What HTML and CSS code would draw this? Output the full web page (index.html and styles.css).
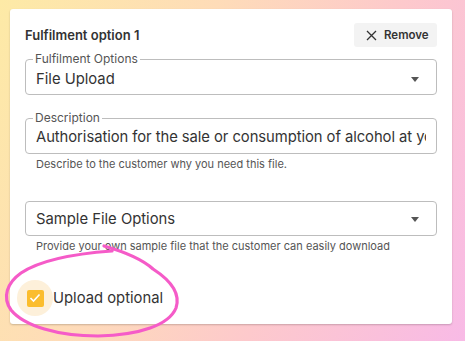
FILE: index.html
```html
<!DOCTYPE html>
<html lang="en">
<head>
  <meta charset="UTF-8" />
  <title>Fulfilment option</title>
  <link rel="stylesheet" href="styles.css">
</head>
<body>
  <div class="card">
    <div class="card-head">
      <h2 class="title">Fulfilment option 1</h2>
      <button class="remove-btn">
        <svg width="11" height="11" viewBox="0 0 11 11"><path d="M1 1L10 10M10 1L1 10" stroke="#333" stroke-width="1.3" fill="none"/></svg>
        Remove
      </button>
    </div>

    <fieldset class="field select">
      <legend>Fulfilment Options</legend>
      <div class="value">File Upload</div>
      <span class="caret"></span>
    </fieldset>

    <fieldset class="field desc">
      <legend>Description</legend>
      <div class="value">Authorisation for the sale or consumption of alcohol at your venue or event</div>
    </fieldset>
    <p class="helper">Describe to the customer why you need this file.</p>

    <div class="field select plain">
      <div class="value">Sample File Options</div>
      <span class="caret"></span>
    </div>
    <p class="helper">Provide your own sample file that the customer can easily download</p>

    <label class="check-row">
      <span class="check-halo">
        <span class="check-box">
          <svg width="12" height="10" viewBox="0 0 12 10"><path d="M1.5 5L4.5 8L10.5 1.5" stroke="#fff" stroke-width="1.6" fill="none"/></svg>
        </span>
      </span>
      Upload optional
    </label>
  </div>

  <!-- hand drawn highlight -->
  <svg class="scribble" viewBox="0 0 465 341" width="465" height="341">
    <path d="M104 246 C125 252 142 259 153 269 C170 280 181 293 176 308 C169 325 140 335 98 336 C58 336 24 326 11 310 C2 297 7 283 21 273 C39 261 70 254 112 251"
      stroke="#f55bc8" stroke-width="3.2" fill="none" stroke-linecap="round"/>
  </svg>
</body>
</html>
```

FILE: styles.css
```css
body {
  margin: 0;
  padding: 9px 13px 18px 10px;
  height: 341px;
  box-sizing: border-box;
  position: relative;
  overflow: hidden;
  font-family: 'Inter', 'Liberation Sans', sans-serif;
  color: #333;
  background: linear-gradient(115deg, #fdeaa6 0%, #fedcb8 35%, #fdc9cc 65%, #f8bae6 100%);
}
.card {
  background: #fff;
  border-radius: 3px;
  box-shadow: 0 1px 2px rgba(0, 0, 0, 0.2);
  padding: 14px 15px 8px 15px;
}
.card-head {
  display: flex;
  justify-content: space-between;
  align-items: center;
  height: 24px;
}
.title {
  margin: 0;
  font-size: 13px;
  font-weight: 600;
  color: #333;
}
.remove-btn {
  display: flex;
  align-items: center;
  gap: 7px;
  height: 24px;
  width: 83px;
  padding: 0 0 0 12px;
  border: none;
  border-radius: 3px;
  background: #f3f3f3;
  font-family: inherit;
  font-size: 11.5px;
  font-weight: 600;
  color: #333;
}
.field {
  position: relative;
  margin: 0;
  padding: 0 10px;
  border: 1px solid #bdbdbd;
  border-radius: 4px;
  min-width: 0;
}
.field legend {
  margin-left: -3px;
  padding: 0 2px;
  font-size: 12px;
  line-height: 14px;
  color: #555;
}
.field .value {
  font-size: 14.8px;
  line-height: 20px;
  padding: 3px 0 5px;
  white-space: nowrap;
  overflow: hidden;
}
.field.select {
  margin-top: 5px;
}
.field.desc {
  margin-top: 16px;
}
.field.desc .value {
  padding: 2px 0 6px;
  letter-spacing: -0.06px;
}
.field.plain {
  margin-top: 30px;
  height: 35px;
  box-sizing: border-box;
  display: flex;
  align-items: center;
}
.field.plain .value {
  padding: 0;
}
.caret {
  position: absolute;
  right: 17px;
  top: 50%;
  margin-top: -3px;
  border-left: 4px solid transparent;
  border-right: 4px solid transparent;
  border-top: 5px solid #555;
}
.field.plain .caret {
  margin-top: -2px;
}
.helper {
  margin: 3px 0 0 11px;
  font-size: 11px;
  line-height: 14px;
  color: #555;
}
.check-row {
  display: flex;
  align-items: center;
  margin-top: 27px;
  font-size: 14.8px;
  color: #333;
}
.check-halo {
  width: 36px;
  height: 36px;
  border-radius: 50%;
  background: #fdf0da;
  display: flex;
  align-items: center;
  justify-content: center;
  margin-left: -8px;
}
.check-box {
  width: 17px;
  height: 17px;
  border-radius: 2px;
  background: #fbbd2e;
  display: flex;
  align-items: center;
  justify-content: center;
}
.scribble {
  position: absolute;
  left: 0;
  top: 0;
  pointer-events: none;
}
```
